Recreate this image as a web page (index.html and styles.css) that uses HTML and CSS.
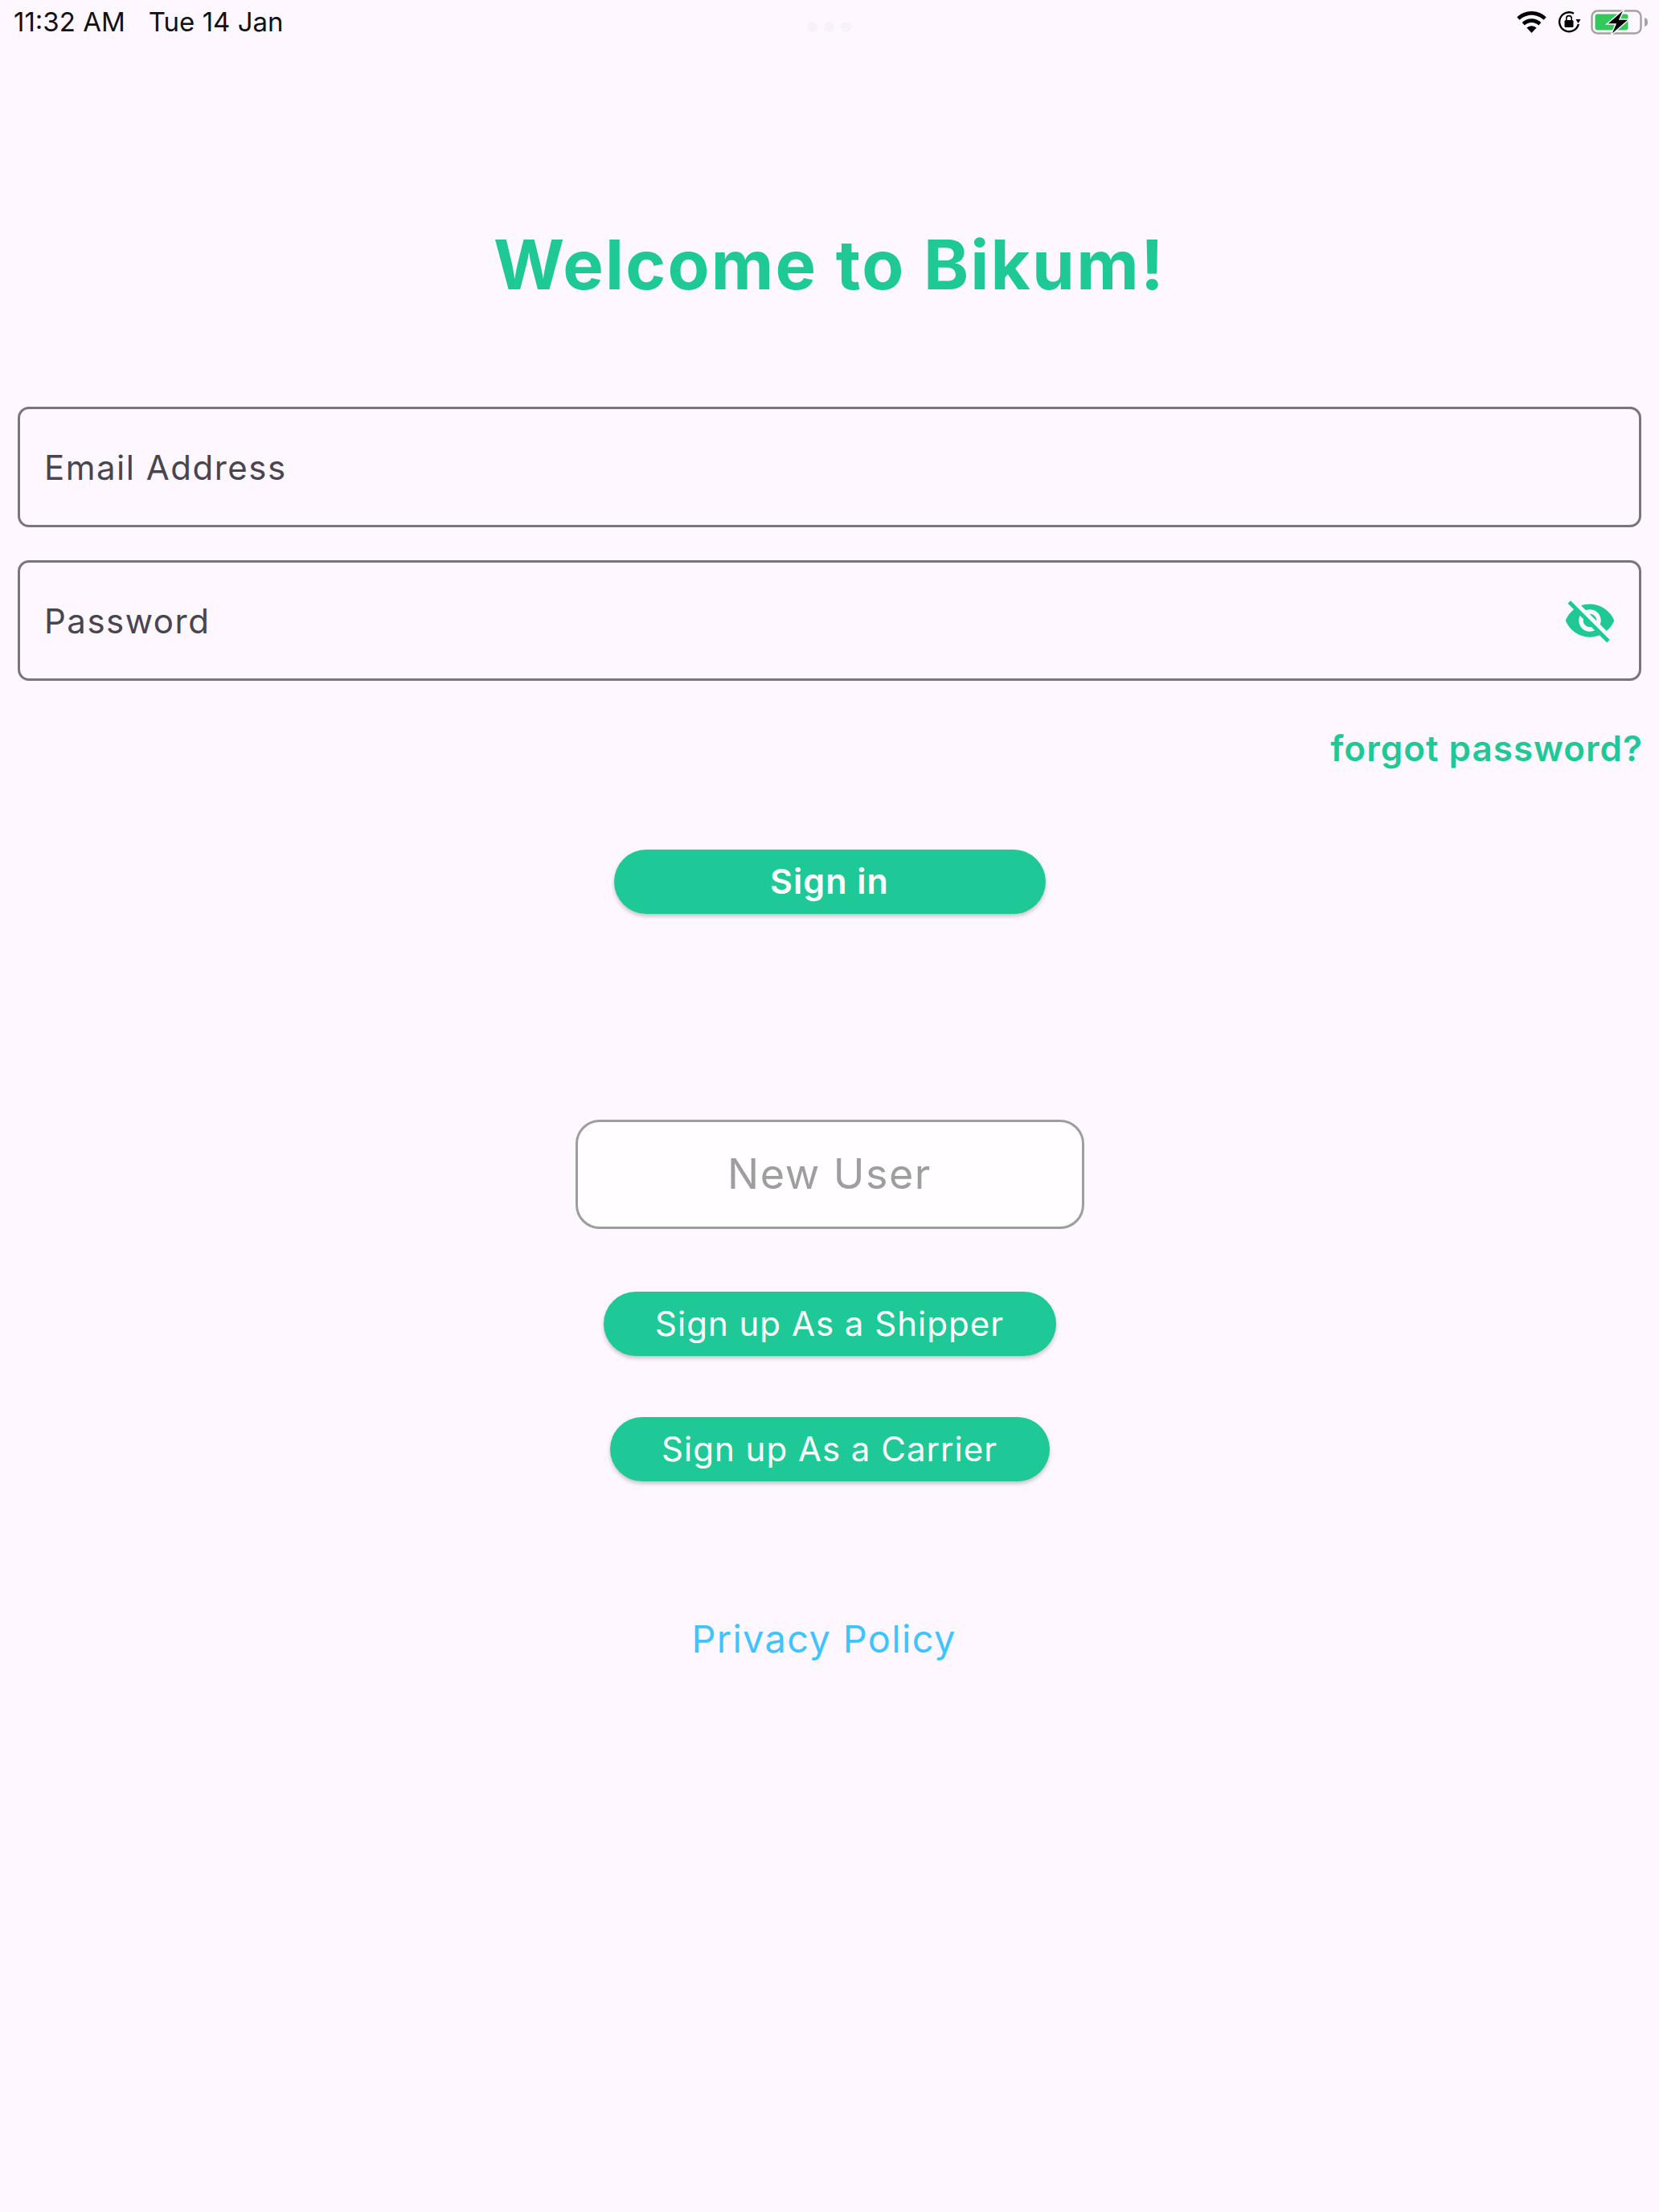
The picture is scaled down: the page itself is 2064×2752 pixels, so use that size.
FILE: index.html
```html
<!DOCTYPE html>
<html lang="en">
<head>
  <meta charset="UTF-8" />
  <title>Welcome to Bikum!</title>
  <link rel="stylesheet" href="styles.css">
</head>
<body>
  <div class="statusbar">
    <div class="status-time">
      <span>11:32 AM</span>
      <span>Tue 14 Jan</span>
    </div>
    <div class="status-dots">
      <span></span><span></span><span></span>
    </div>
    <div class="status-icons">
      <svg class="icon-wifi" viewBox="0 0 37 27">
        <path d="M18.5 0C11.4 0 5 2.8 .3 7.4l3.2 3.4C7.4 7 12.7 4.7 18.5 4.7s11.1 2.3 15 6.1l3.2-3.4C32 2.8 25.6 0 18.5 0z"/>
        <path d="M18.5 9.2c-4.6 0-8.8 1.8-11.9 4.8l3.2 3.4c2.3-2.2 5.3-3.5 8.7-3.5s6.4 1.3 8.7 3.5l3.2-3.4c-3.1-3-7.3-4.8-11.9-4.8z"/>
        <path d="M18.5 18.2c-2.4 0-4.500 .9-6.100 2.400L18.500 27l6.100-6.400c-1.600-1.500-3.700-2.400-6.100-2.400z"/>
      </svg>
      <svg class="icon-lock" viewBox="0 0 29 27">
        <path d="M25.800 16A12 12 0 1 1 20 2.800" fill="none" stroke="#000" stroke-width="2.400"/>
        <path d="M22.500 10h6l-3 5z"/>
        <rect x="8.500" y="11" width="11" height="9" rx="1.500"/>
        <path d="M10.800 11.500V8.800a3.200 3.200 0 0 1 6.400 0v2.700" fill="none" stroke="#000" stroke-width="1.600"/>
      </svg>
      <svg class="icon-battery" viewBox="0 0 72 33">
        <rect x="1.500" y="2.500" width="61" height="28" rx="7" fill="none" stroke="#a3a3a3" stroke-width="2.500"/>
        <rect x="5.500" y="6.500" width="41" height="20" rx="3" fill="#34c759"/>
        <path d="M67 11c3 .5 4 2.500 4 5.500s-1 5-4 5.500z" fill="#a3a3a3"/>
        <path d="M42 0 20 19h11l-6 14 23-20H36z" fill="#000" stroke="#fef7ff" stroke-width="1.500"/>
      </svg>
    </div>
  </div>

  <div class="page">
    <h1 class="title">Welcome to Bikum!</h1>

    <div class="field">
      <span>Email Address</span>
    </div>
    <div class="field field-password">
      <span>Password</span>
      <svg class="icon-eye" viewBox="0 0 24 24">
        <path d="M12 7c2.760 0 5 2.240 5 5 0 .650-.130 1.260-.360 1.830l2.920 2.920c1.510-1.260 2.700-2.890 3.430-4.750-1.730-4.390-6-7.500-11-7.500-1.400 0-2.740.250-3.980.700l2.160 2.160C10.740 7.130 11.350 7 12 7zM2 4.270l2.280 2.280.460.460C3.080 8.300 1.780 10.020 1 12c1.730 4.390 6 7.500 11 7.500 1.550 0 3.030-.300 4.380-.840l.420.420L19.730 22 21 20.730 3.270 3 2 4.270zM7.530 9.800l1.550 1.550c-.050.210-.080.430-.080.650 0 1.660 1.340 3 3 3 .220 0 .440-.030.650-.080l1.550 1.550c-.670.330-1.410.530-2.200.530-2.760 0-5-2.240-5-5 0-.790.200-1.530.530-2.200zm4.310-.780l3.150 3.150.020-.160c0-1.660-1.340-3-3-3l-.170.010z"/>
      </svg>
    </div>

    <a class="forgot">forgot password?</a>

    <button class="btn btn-signin">Sign in</button>

    <div class="new-user">New User</div>

    <button class="btn btn-shipper">Sign up As a Shipper</button>
    <button class="btn btn-carrier">Sign up As a Carrier</button>

    <a class="privacy">Privacy Policy</a>
  </div>
</body>
</html>
```

FILE: styles.css
```css
:root {
  --bg-color: #FEF7FF;
  --green: #1FC997;
  --field-border: #79747E;
  --field-text: #49454F;
}
* {
  box-sizing: border-box;
}
body {
  margin: 0;
  min-height: 2752px;
  background-color: var(--bg-color);
  font-family: 'Inter', 'Liberation Sans', sans-serif;
}

/* status bar */
.statusbar {
  display: grid;
  grid-template-columns: 1fr auto 1fr;
  align-items: center;
  height: 54px;
  padding: 0 13px 0 17px;
}
.status-time {
  display: flex;
  gap: 29px;
  font-size: 33px;
  color: #111;
  line-height: 52px;
}
.status-dots {
  display: flex;
  gap: 8px;
  padding-top: 12px;
  margin-right: 6px;
}
.status-dots span {
  width: 13px;
  height: 13px;
  border-radius: 50%;
  background-color: #F7F1F8;
}
.status-icons {
  display: flex;
  align-items: center;
  justify-content: flex-end;
}
.icon-wifi {
  width: 37px;
  height: 27px;
  margin-right: 14px;
}
.icon-lock {
  width: 29px;
  height: 27px;
  margin-right: 12px;
}
.icon-battery {
  width: 72px;
  height: 33px;
}

/* form */
.page {
  display: flex;
  flex-direction: column;
  align-items: center;
  padding: 0 22px;
}
.title {
  margin: 226px 0 0;
  height: 100px;
  font-size: 85px;
  line-height: 100px;
  font-weight: 700;
  letter-spacing: 2.200px;
  color: var(--green);
}
.field {
  display: flex;
  align-items: center;
  justify-content: space-between;
  width: 100%;
  height: 150px;
  margin-top: 126px;
  padding: 0 30px;
  border: 3px solid var(--field-border);
  border-radius: 14px;
  font-size: 42px;
  letter-spacing: 1.500px;
  color: var(--field-text);
}
.field-password {
  margin-top: 41px;
  padding-right: 28px;
}
.icon-eye {
  width: 66px;
  height: 66px;
  fill: var(--green);
}
.forgot {
  align-self: flex-end;
  margin-top: 56px;
  margin-right: -2px;
  font-size: 44px;
  line-height: 56px;
  font-weight: 600;
  letter-spacing: 1px;
  color: var(--green);
}
.btn {
  height: 80px;
  border: none;
  border-radius: 40px;
  background-color: var(--green);
  box-shadow: 0 3px 5px rgba(0,0,0,0.22);
  color: white;
  font-family: inherit;
  font-size: 42px;
  letter-spacing: 1px;
  padding: 0 0 2px;
}
.btn-signin {
  width: 537px;
  margin-top: 98px;
  font-size: 43px;
  font-weight: 600;
}
.new-user {
  display: flex;
  align-items: center;
  justify-content: center;
  width: 633px;
  height: 136px;
  margin-top: 256px;
  padding-bottom: 2px;
  border: 3px solid #9E9E9E;
  border-radius: 30px;
  background-color: #FFFDFF;
  font-size: 52px;
  letter-spacing: 1.500px;
  color: #9E9E9E;
}
.btn-shipper {
  width: 563px;
  margin-top: 78px;
}
.btn-carrier {
  width: 547px;
  margin-top: 76px;
}
.privacy {
  margin-top: 166px;
  margin-right: 14px;
  font-size: 47px;
  line-height: 60px;
  letter-spacing: 1.300px;
  color: #40C4FF;
}
```
